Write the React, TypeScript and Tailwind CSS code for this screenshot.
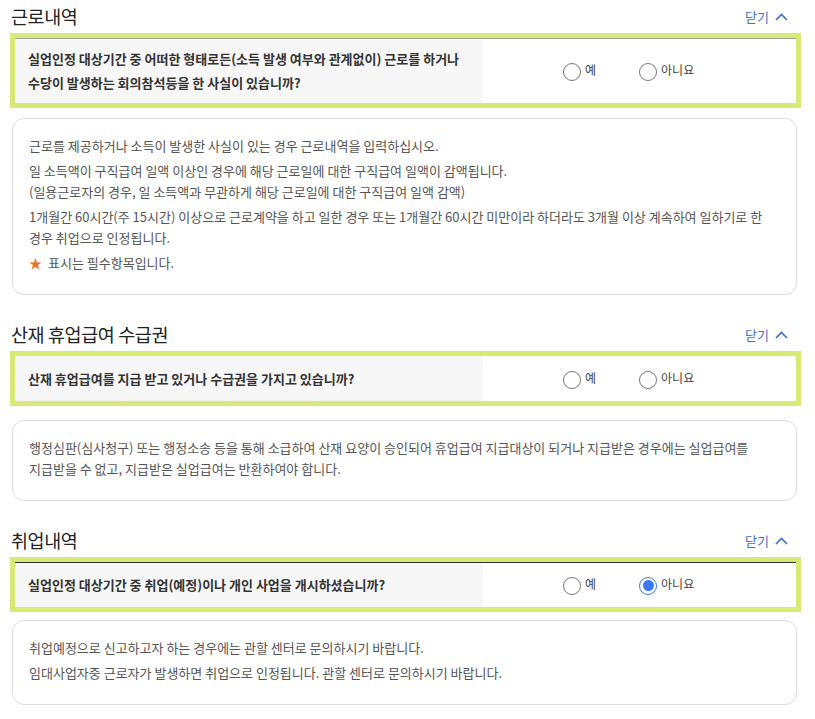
import React from 'react';

type Section = {
  title: string;
  question: string[];
  topLine: string;
  checked: 'yes' | 'no' | null;
  notes: React.ReactNode[];
  gapClass: string;
};

function Chevron() {
  return (
    <svg width="13" height="8" viewBox="0 0 13 8" className="ml-[6px]">
      <polyline points="1,7 6.5,1.5 12,7" fill="none" stroke="#3f6fd0" strokeWidth="1.7" />
    </svg>
  );
}

function Radio({ label, checked, className }: { label: string; checked: boolean; className?: string }) {
  return (
    <label className={`flex items-start gap-[4px] ${className ?? ''}`}>
      {checked ? (
        <span className="mt-[1px] flex h-[18px] w-[18px] items-center justify-center rounded-full border-[1.5px] border-[#3a78f5] bg-white">
          <span className="h-[11px] w-[11px] rounded-full bg-[#3a78f5]" />
        </span>
      ) : (
        <span className="mt-[1px] h-[18px] w-[18px] rounded-full border border-[#777] bg-white" />
      )}
      <span className="text-[12px] leading-[16px] text-[#444]">{label}</span>
    </label>
  );
}

const sections: Section[] = [
  {
    title: '근로내역',
    question: ['실업인정 대상기간 중 어떠한 형태로든(소득 발생 여부와 관계없이) 근로를 하거나', '수당이 발생하는 회의참석등을 한 사실이 있습니까?'],
    topLine: 'border-[#a0a0a0]',
    checked: null,
    gapClass: 'mt-[10px]',
    notes: [
      '근로를 제공하거나 소득이 발생한 사실이 있는 경우 근로내역을 입력하십시오.',
      <>
        일 소득액이 구직급여 일액 이상인 경우에 해당 근로일에 대한 구직급여 일액이 감액됩니다.
        <br />
        (일용근로자의 경우, 일 소득액과 무관하게 해당 근로일에 대한 구직급여 일액 감액)
      </>,
      '1개월간 60시간(주 15시간) 이상으로 근로계약을 하고 일한 경우 또는 1개월간 60시간 미만이라 하더라도 3개월 이상 계속하여 일하기로 한 경우 취업으로 인정됩니다.',
      <>
        <span className="mr-[6px] text-[#e8742a]">★</span>표시는 필수항목입니다.
      </>,
    ],
  },
  {
    title: '산재 휴업급여 수급권',
    question: ['산재 휴업급여를 지급 받고 있거나 수급권을 가지고 있습니까?'],
    topLine: 'border-[#f7f7f7]',
    checked: null,
    gapClass: 'mt-[14px]',
    notes: [
      '행정심판(심사청구) 또는 행정소송 등을 통해 소급하여 산재 요양이 승인되어 휴업급여 지급대상이 되거나 지급받은 경우에는 실업급여를 지급받을 수 없고, 지급받은 실업급여는 반환하여야 합니다.',
    ],
  },
  {
    title: '취업내역',
    question: ['실업인정 대상기간 중 취업(예정)이나 개인 사업을 개시하셨습니까?'],
    topLine: 'border-[#333]',
    checked: 'no',
    gapClass: 'mt-[8px]',
    notes: [
      '취업예정으로 신고하고자 하는 경우에는 관할 센터로 문의하시기 바랍니다.',
      '임대사업자중 근로자가 발생하면 취업으로 인정됩니다. 관할 센터로 문의하시기 바랍니다.',
    ],
  },
];

export default function App() {
  return (
    <div className="h-[719px] w-[815px] overflow-hidden bg-white pl-[10px] pr-[14px] font-['Noto_Sans_CJK_KR',sans-serif]">
      {sections.map((s, i) => (
        <section key={s.title} className={i === 0 ? '' : 'mt-[23px]'}>
          <div className="flex h-[33px] items-center justify-between pl-[1px] pr-[13px]">
            <h2 className="text-[18.5px] font-normal tracking-[-0.4px] text-[#222]">{s.title}</h2>
            <button className="flex items-center text-[13px] text-[#3f6fd0]">
              닫기
              <Chevron />
            </button>
          </div>

          <div className="border-[5px] border-[#d5eb76]">
            <div className={`flex border-t ${s.topLine}`}>
              <div className="flex min-h-[44px] w-[468px] items-center bg-[#f7f7f7] py-[8px] pl-[13px]">
                <p className="text-[13px] font-bold leading-[24px] text-[#333]">
                  {s.question.map((q, j) => (
                    <React.Fragment key={j}>
                      {j > 0 && <br />}
                      {q}
                    </React.Fragment>
                  ))}
                </p>
              </div>
              <div className="flex flex-1 items-center bg-white pl-[80px]">
                <Radio label="예" checked={s.checked === 'yes'} />
                <Radio label="아니요" checked={s.checked === 'no'} className="ml-[43px]" />
              </div>
            </div>
          </div>

          <div className={`${s.gapClass} ml-[2px] mr-[4px] break-keep rounded-[12px] border border-[#dcdcdc] pb-[21px] pl-[16px] pr-[30px] pt-[16px] text-[13px] leading-[21px] text-[#555]`}>
            {s.notes.map((n, j) => (
              <p key={j} className={j === 0 ? '' : 'mt-[4px]'}>
                {n}
              </p>
            ))}
          </div>
        </section>
      ))}
    </div>
  );
}
